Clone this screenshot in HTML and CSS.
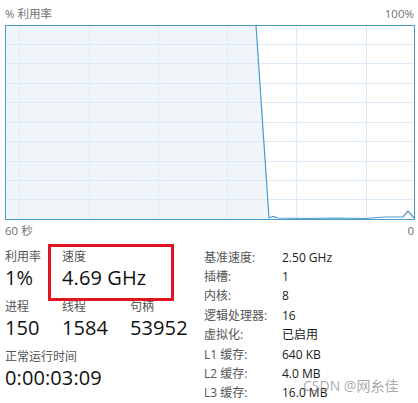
FILE: index.html
```html
<!DOCTYPE html>
<html lang="zh-CN">
<head>
  <meta charset="UTF-8">
  <title>CPU</title>
  <link rel="stylesheet" href="styles.css">
</head>
<body>
  <div class="panel">
    <div class="axis-top">
      <span>% 利用率</span>
      <span>100%</span>
    </div>

    <svg class="graph" width="410" height="195" viewBox="0 0 410 195">
      <rect x="0.5" y="0.5" width="409" height="194" fill="#ffffff"/>
      <polygon points="1,1 251,1 264,194 1,194" fill="#f0f5fa"/>
      <g stroke="#dcebf7" stroke-width="1">
        <line x1="14.5" y1="1" x2="14.5" y2="194"/>
        <line x1="84.5" y1="1" x2="84.5" y2="194"/>
        <line x1="153.5" y1="1" x2="153.5" y2="194"/>
        <line x1="222.5" y1="1" x2="222.5" y2="194"/>
        <line x1="291.5" y1="1" x2="291.5" y2="194"/>
        <line x1="361.5" y1="1" x2="361.5" y2="194"/>
        <line x1="1" y1="19.5" x2="409" y2="19.5"/>
        <line x1="1" y1="38.5" x2="409" y2="38.5"/>
        <line x1="1" y1="58.5" x2="409" y2="58.5"/>
        <line x1="1" y1="77.5" x2="409" y2="77.5"/>
        <line x1="1" y1="97.5" x2="409" y2="97.5"/>
        <line x1="1" y1="116.5" x2="409" y2="116.5"/>
        <line x1="1" y1="136.5" x2="409" y2="136.5"/>
        <line x1="1" y1="155.5" x2="409" y2="155.5"/>
        <line x1="1" y1="174.5" x2="409" y2="174.5"/>
      </g>
      <polyline points="251,0.5 264,193 268,191.5 273,193 300,193.5 330,193 360,193.5 380,192 398,192 403,186 409,193"
                fill="none" stroke="#4b9bd0" stroke-width="1.2"/>
      <rect x="0.5" y="0.5" width="409" height="194" fill="none" stroke="#4b9bd0" stroke-width="1"/>
    </svg>

    <div class="axis-bottom">
      <span>60 秒</span>
      <span>0</span>
    </div>

    <div class="stats">
      <div class="stats-left">
        <div class="stat-row">
          <div class="stat w1">
            <div class="stat-label">利用率</div>
            <div class="stat-value">1%</div>
          </div>
          <div class="stat marked">
            <div class="stat-label">速度</div>
            <div class="stat-value">4.69 GHz</div>
          </div>
        </div>
        <div class="stat-row">
          <div class="stat w1">
            <div class="stat-label">进程</div>
            <div class="stat-value">150</div>
          </div>
          <div class="stat w2">
            <div class="stat-label">线程</div>
            <div class="stat-value">1584</div>
          </div>
          <div class="stat">
            <div class="stat-label">句柄</div>
            <div class="stat-value">53952</div>
          </div>
        </div>
        <div class="stat-row">
          <div class="stat">
            <div class="stat-label">正常运行时间</div>
            <div class="stat-value">0:00:03:09</div>
          </div>
        </div>
      </div>

      <dl class="specs">
        <dt>基准速度:</dt><dd>2.50 GHz</dd>
        <dt>插槽:</dt><dd>1</dd>
        <dt>内核:</dt><dd>8</dd>
        <dt>逻辑处理器:</dt><dd>16</dd>
        <dt>虚拟化:</dt><dd>已启用</dd>
        <dt>L1 缓存:</dt><dd>640 KB</dd>
        <dt>L2 缓存:</dt><dd>4.0 MB</dd>
        <dt>L3 缓存:</dt><dd>16.0 MB</dd>
      </dl>
    </div>

    <div class="watermark">CSDN @网糸佳</div>
  </div>
</body>
</html>
```

FILE: styles.css
```css
* {
  box-sizing: border-box;
  margin: 0;
  padding: 0;
}

body {
  font-family: 'Open Sans', 'Noto Sans CJK SC', sans-serif;
  background-color: #ffffff;
  color: #1a1a1a;
  width: 418px;
  height: 403px;
  overflow: hidden;
}

.panel {
  position: relative;
  padding: 0 4px 0 5px;
}

.axis-top,
.axis-bottom {
  display: flex;
  justify-content: space-between;
  font-size: 11.5px;
  color: #707070;
}

.axis-top {
  height: 25px;
  line-height: 27px;
}

.axis-bottom {
  height: 22px;
  line-height: 22px;
}

.graph {
  display: block;
}

.stats {
  display: flex;
  margin-top: 5px;
}

.stats-left {
  width: 199px;
}

.stat-row {
  display: flex;
  height: 50px;
}

.stat.w1 {
  width: 57px;
}

.stat.w2 {
  width: 68px;
}

.stat-label {
  font-size: 12px;
  line-height: 20px;
  color: #555555;
}

.stat-value {
  font-size: 20px;
  line-height: 22px;
  color: #111111;
  letter-spacing: 0.1px;
  white-space: nowrap;
}

.marked {
  position: relative;
}

.marked::after {
  content: '';
  position: absolute;
  left: -14px;
  top: -3px;
  width: 120px;
  height: 51px;
  border: 3px solid #e0151f;
}

.specs {
  display: grid;
  grid-template-columns: 78px auto;
  font-size: 12px;
  line-height: 19.4px;
  padding-top: 0.5px;
}

.specs dt {
  color: #555555;
}

.specs dd {
  color: #1a1a1a;
}

.watermark {
  position: absolute;
  left: 303px;
  top: 376px;
  font-size: 14px;
  line-height: 20px;
  color: rgba(140, 140, 140, 0.75);
  white-space: nowrap;
}
```
